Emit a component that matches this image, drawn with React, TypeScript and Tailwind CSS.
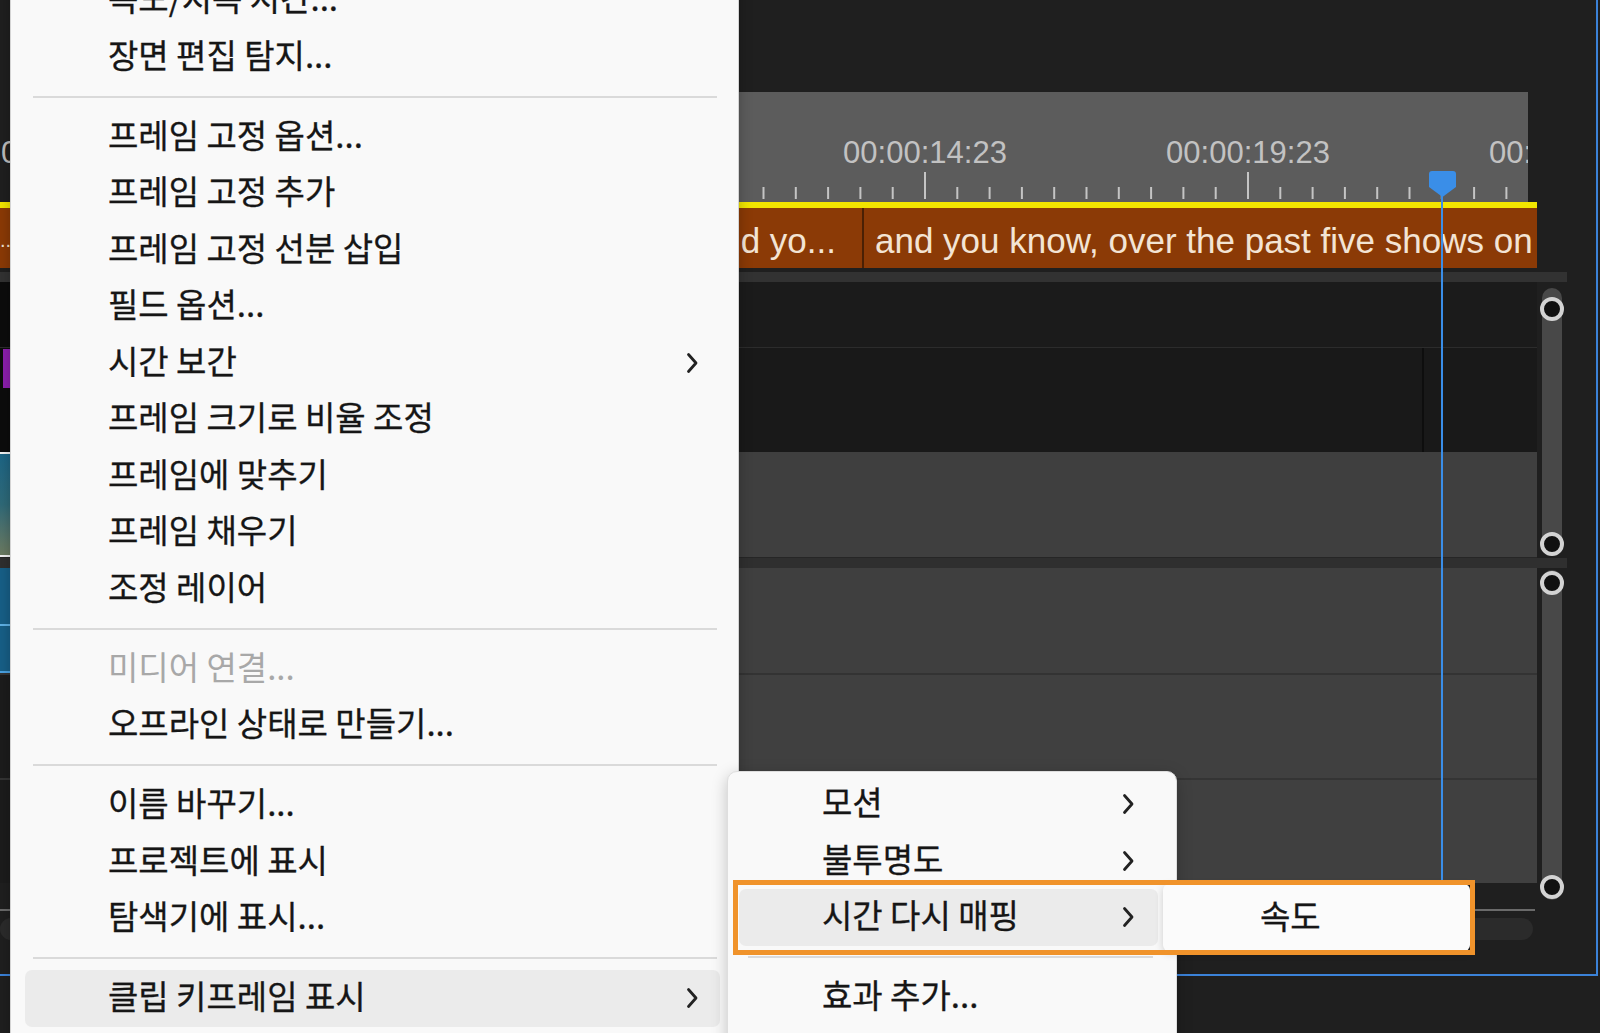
import React from 'react';

type Entry =
    | { kind: 'item'; label: string; sub?: boolean; disabled?: boolean; active?: boolean }
    | { kind: 'sep' };

const mainMenu: Entry[] = [
    { kind: 'item', label: '속도/지속 시간...' },
    { kind: 'item', label: '장면 편집 탐지...' },
    { kind: 'sep' },
    { kind: 'item', label: '프레임 고정 옵션...' },
    { kind: 'item', label: '프레임 고정 추가' },
    { kind: 'item', label: '프레임 고정 선분 삽입' },
    { kind: 'item', label: '필드 옵션...' },
    { kind: 'item', label: '시간 보간', sub: true },
    { kind: 'item', label: '프레임 크기로 비율 조정' },
    { kind: 'item', label: '프레임에 맞추기' },
    { kind: 'item', label: '프레임 채우기' },
    { kind: 'item', label: '조정 레이어' },
    { kind: 'sep' },
    { kind: 'item', label: '미디어 연결...', disabled: true },
    { kind: 'item', label: '오프라인 상태로 만들기...' },
    { kind: 'sep' },
    { kind: 'item', label: '이름 바꾸기...' },
    { kind: 'item', label: '프로젝트에 표시' },
    { kind: 'item', label: '탐색기에 표시...' },
    { kind: 'sep' },
    { kind: 'item', label: '클립 키프레임 표시', sub: true, active: true },
];

const subMenu: Entry[] = [
    { kind: 'item', label: '모션', sub: true },
    { kind: 'item', label: '불투명도', sub: true },
    { kind: 'item', label: '시간 다시 매핑', sub: true, active: true },
    { kind: 'sep' },
    { kind: 'item', label: '효과 추가...' },
];

const Chevron = () => (
    <svg width="13" height="22" viewBox="0 0 13 22" fill="none">
        <path d="M2.5 2.5 L10 11 L2.5 19.5" stroke="#222222" strokeWidth="2.8" strokeLinecap="round" strokeLinejoin="round" />
    </svg>
);

const MenuList: React.FC<{ entries: Entry[]; sepClass: string; chevronPad: string }> = ({ entries, sepClass, chevronPad }) => (
    <>
        {entries.map((e, i) =>
            e.kind === 'sep' ? (
                <div key={i} className={`h-[23.5px] flex items-center ${sepClass}`}>
                    <div className="h-[2px] w-full bg-[#dadada]" />
                </div>
            ) : (
                <div
                    key={i}
                    className={`h-[56.5px] flex items-center justify-between pl-[83px] ${chevronPad} rounded-[7px] text-[33px] leading-none whitespace-nowrap ${
                        e.active ? 'bg-[#ebebeb]' : ''
                    } ${e.disabled ? 'text-[#a8a8a8]' : 'text-[#161616] [-webkit-text-stroke:0.3px_#161616]'}`}
                >
                    <span className="pb-[5px]">{e.label}</span>
                    {e.sub && <Chevron />}
                </div>
            )
        )}
    </>
);

const Knob = () => <div className="w-[24px] h-[24px] rounded-full border-[4px] border-[#d3d3d3] bg-[#111111]" />;

// ruler tick positions, relative to the work-area bar (starts at x=300)
const ticks = Array.from({ length: 40 }, (_, i) => i - 20)
    .map((k) => ({ x: 925 + k * 32.3 - 300, major: k % 10 === 0 }))
    .filter((t) => t.x > 0 && t.x < 1222);

const labels = [
    { x: 925 - 300, text: '00:00:14:23' },
    { x: 1248 - 300, text: '00:00:19:23' },
    { x: 1571 - 300, text: '00:00:24:23' },
];

export default function App() {
    return (
        <div className="relative w-[1600px] h-[1033px] overflow-hidden bg-[#1f1f1f] font-['Liberation_Sans',sans-serif]">
            {/* timeline panel */}
            <div className="flex w-[1598px] h-[976px] border-r-2 border-b-2 border-[#3b82d8]">
                <div className="flex flex-col w-[1537px]">
                    <div className="h-[92px] shrink-0" />
                    {/* ruler */}
                    <div className="relative h-[110px] shrink-0 flex">
                        <div className="w-[10px] h-full overflow-hidden relative">
                            <span className="absolute left-[1px] top-[45px] text-[31px] leading-none text-[#bcbcbc] whitespace-nowrap">0</span>
                        </div>
                        <div className="relative ml-[290px] w-[1228px] h-full bg-[#5c5c5c] overflow-hidden">
                            <svg className="absolute inset-0" width="1228" height="110">
                                {ticks.map((t, i) => (
                                    <line key={i} x1={t.x} x2={t.x} y1={t.major ? 80 : 95} y2={107} stroke="#c4c4c4" strokeWidth="2" />
                                ))}
                            </svg>
                            {labels.map((l) => (
                                <span
                                    key={l.text}
                                    className="absolute top-[45px] -translate-x-1/2 text-[31px] leading-none text-[#c2c2c2] whitespace-nowrap"
                                    style={{ left: l.x }}
                                >
                                    {l.text}
                                </span>
                            ))}
                        </div>
                    </div>
                    <div className="h-[6px] shrink-0 bg-[#f2e500]" />
                    {/* caption track */}
                    <div className="h-[60px] shrink-0 flex bg-[#8b3a06] text-[35px] leading-none text-[#f3e4d4] whitespace-nowrap">
                        <div className="w-[12px] flex items-center pt-[4px] overflow-hidden text-[20px]">..</div>
                        <div className="w-[850px] flex items-center justify-end pr-[26px] pt-[4px] overflow-hidden">
                            <span>and yo...</span>
                        </div>
                        <div className="w-[2px] bg-[#4a2004]" />
                        <div className="flex-1 flex items-center pl-[11px] pt-[4px] overflow-hidden">
                            <span>and you know, over the past five shows on this</span>
                        </div>
                    </div>
                    <div className="h-[4px] shrink-0" />
                    <div className="h-[10px] shrink-0 bg-[#323232]" />
                    {/* video tracks */}
                    <div className="h-[65px] shrink-0 flex">
                        <div className="w-[10px] bg-[#0c0c0c]" />
                        <div className="flex-1 bg-[#1b1b1b]" />
                    </div>
                    <div className="h-[1px] shrink-0 bg-[#2c2c2c]" />
                    <div className="h-[104px] shrink-0 flex">
                        <div className="w-[10px] flex flex-col bg-[#0c0c0c]">
                            <div className="ml-[3px] mt-[1px] h-[39px] bg-[#8d1fae]" />
                        </div>
                        <div className="w-[1412px] bg-[#191919]" />
                        <div className="w-[2px] bg-[#0e0e0e]" />
                        <div className="flex-1 bg-[#191919]" />
                    </div>
                    <div className="h-[105px] shrink-0 flex">
                        <div className="w-[12px] border-y-2 border-[#f2f2f2] bg-gradient-to-b from-[#1c6585] via-[#2f6a78] to-[#6b7a60]" />
                        <div className="flex-1 bg-[#3f3f3f]" />
                    </div>
                    <div className="h-[1px] shrink-0 bg-[#262626]" />
                    <div className="h-[10px] shrink-0 bg-[#2f2f2f]" />
                    {/* audio tracks */}
                    <div className="h-[105px] shrink-0 flex">
                        <div className="w-[12px] flex flex-col bg-[#175f87]">
                            <div className="h-[56px]" />
                            <div className="h-[2px] bg-[#5fb2e6]" />
                            <div className="flex-1" />
                            <div className="h-[2px] bg-[#4aa2e2]" />
                        </div>
                        <div className="flex-1 bg-[#3f3f3f]" />
                    </div>
                    <div className="h-[2px] shrink-0 bg-[#333333]" />
                    <div className="h-[103px] shrink-0 flex">
                        <div className="w-[10px] bg-[#1c1c1c]" />
                        <div className="flex-1 bg-[#404040]" />
                    </div>
                    <div className="h-[2px] shrink-0 bg-[#343434]" />
                    <div className="h-[103px] shrink-0 flex">
                        <div className="w-[10px] bg-[#1c1c1c]" />
                        <div className="flex-1 bg-[#404040]" />
                    </div>
                    {/* horizontal scroller */}
                    <div className="h-[26px] shrink-0" />
                    <div className="h-[2px] w-[1535px] shrink-0 bg-[#6a6a6a]" />
                    <div className="h-[7px] shrink-0" />
                    <div className="h-[22px] w-[1533px] shrink-0 rounded-full bg-[#2b2b2b]" />
                </div>
                {/* vertical scrollers */}
                <div className="flex flex-col w-[59px]">
                    <div className="h-[272px] shrink-0" />
                    <div className="h-[10px] w-[30px] shrink-0 bg-[#323232]" />
                    <div className="h-[276px] shrink-0 pt-[6px] pl-[5px]">
                        <div className="w-[20px] h-[268px] rounded-full bg-[#484848] flex flex-col items-center justify-between pt-[9px]">
                            <Knob />
                            <Knob />
                        </div>
                    </div>
                    <div className="h-[10px] w-[30px] shrink-0 bg-[#2f2f2f]" />
                    <div className="h-[332px] shrink-0 pt-[2px] pl-[5px]">
                        <div className="w-[20px] h-[330px] rounded-full bg-[#484848] flex flex-col items-center justify-between py-[1px]">
                            <Knob />
                            <Knob />
                        </div>
                    </div>
                </div>
            </div>

            {/* playhead */}
            <svg className="absolute left-[1429px] top-[171px]" width="27" height="26" viewBox="0 0 27 26">
                <path d="M3 0 H24 Q27 0 27 3 V16 L13.5 26 L0 16 V3 Q0 0 3 0 Z" fill="#3a8ee8" />
            </svg>
            <div className="absolute left-[1441px] top-[192px] w-[2px] h-[691px] bg-[#3a8ee8]" />

            {/* context menu */}
            <div className="absolute left-[10px] top-[-35px] w-[729px] h-[1100px] pt-[6px] pl-[14px] pr-[18px] bg-[#f9f9f9] border border-[#d4d4d4] rounded-[8px] shadow-[0_4px_14px_rgba(0,0,0,0.25)] font-['Noto_Sans_CJK_KR',sans-serif]">
                <MenuList entries={mainMenu} sepClass="ml-[8px] mr-[3px]" chevronPad="pr-[21px]" />
            </div>

            {/* submenu */}
            <div className="absolute left-[727px] top-[771px] w-[450px] h-[300px] pt-[4px] pl-[11px] pr-[18px] bg-[#f9f9f9] border border-[#dedede] rounded-[10px] shadow-[0_4px_16px_rgba(0,0,0,0.22)] font-['Noto_Sans_CJK_KR',sans-serif]">
                <MenuList entries={subMenu} sepClass="ml-[9px] mr-[5px]" chevronPad="pr-[23px]" />
            </div>

            {/* third level */}
            <div className="absolute left-[1163px] top-[884px] w-[307px] h-[67px] flex items-center pl-[97px] bg-[#fbfbfb] rounded-[6px] shadow-[0_2px_8px_rgba(0,0,0,0.18)] text-[33px] leading-none text-[#161616] [-webkit-text-stroke:0.3px_#161616] font-['Noto_Sans_CJK_KR',sans-serif]">
                <span className="pb-[4px]">속도</span>
            </div>

            {/* highlight annotation */}
            <div className="absolute left-[733px] top-[880px] w-[742px] h-[75px] border-[5px] border-[#f0932b]" />
        </div>
    );
}
